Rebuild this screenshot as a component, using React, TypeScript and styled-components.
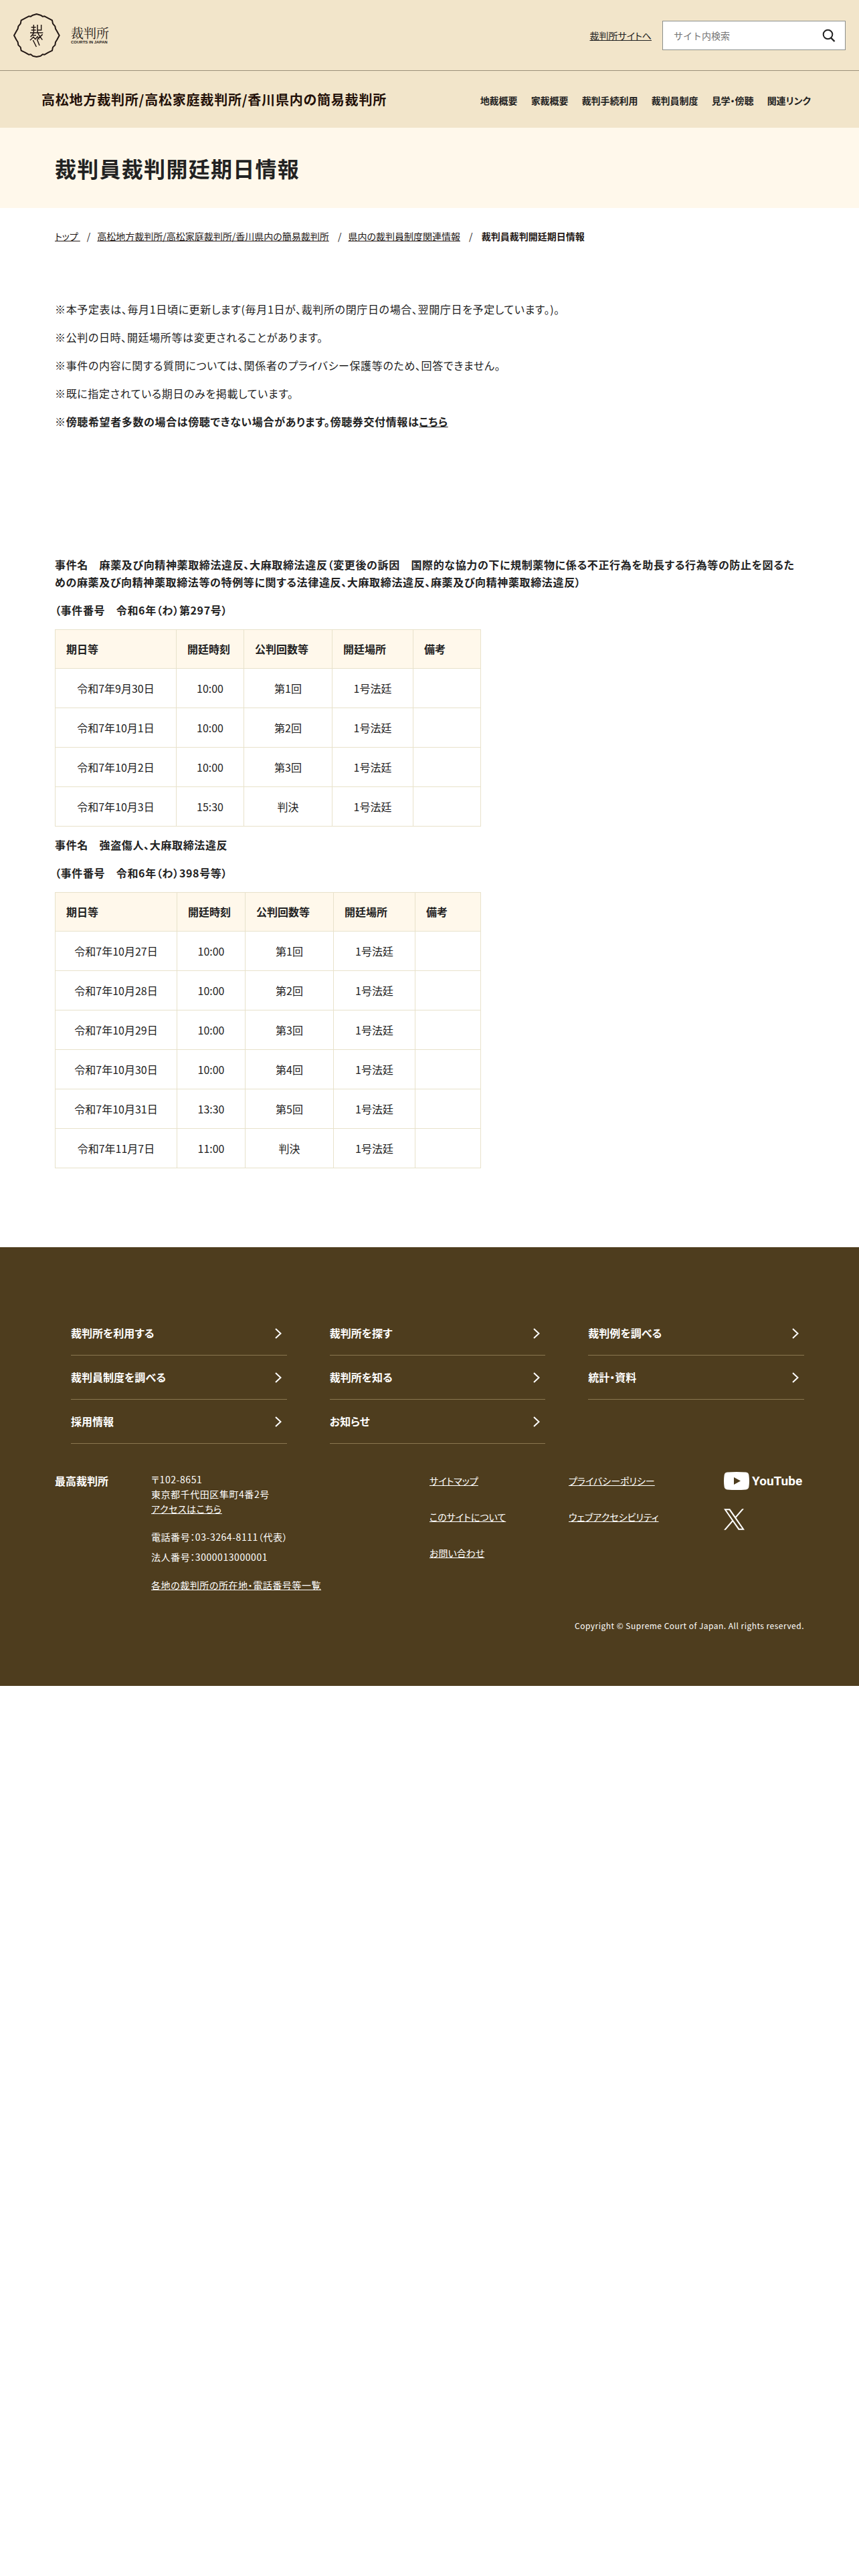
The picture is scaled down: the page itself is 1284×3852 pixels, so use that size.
import React from "react";
import styled, { createGlobalStyle } from "styled-components";

const GlobalStyle = createGlobalStyle`
  *, *::before, *::after { box-sizing: border-box; }
  body {
    margin: 0;
    background: #fff;
    color: #222;
    font-family: "Noto Sans CJK JP", "Noto Sans", sans-serif;
    font-feature-settings: "palt";
    font-size: 16px;
    line-height: 26px;
  }
  a { color: inherit; }
  h1, h2, p, ul, ol { margin: 0; padding: 0; }
  ul, ol { list-style: none; }
`;

const HeaderTop = styled.header`
  display: flex;
  align-items: center;
  justify-content: space-between;
  padding: 20px 20px 19px;
  background: #f2e5ca;
  border-bottom: 1px solid #9c907a;
`;

const Brand = styled.a`
  display: flex;
  align-items: center;
  gap: 16px;
  color: #231815;
  text-decoration: none;
`;

const BrandText = styled.span`
  display: flex;
  flex-direction: column;
`;

const BrandName = styled.span`
  font-family: "Noto Serif CJK JP", "Noto Sans CJK JP", serif;
  font-size: 19px;
  line-height: 20px;
`;

const BrandSub = styled.span`
  font-family: "Liberation Sans", Arial, sans-serif;
  font-size: 6px;
  line-height: 8px;
  font-weight: 700;
`;

const HeaderTools = styled.div`
  display: flex;
  align-items: center;
  gap: 16px;
`;

const SmallLink = styled.a`
  font-size: 14px;
  line-height: 22px;
`;

const SearchForm = styled.form`
  display: flex;
  align-items: center;
  width: 274px;
  height: 44px;
  background: #fff;
  border: 1px solid #8b8f8c;
`;

const SearchInput = styled.input`
  flex: 1;
  min-width: 0;
  padding: 0 16px;
  border: 0;
  outline: 0;
  background: transparent;
  font-family: inherit;
  font-size: 14px;
  color: #222;
  &::placeholder { color: #757575; opacity: 1; }
`;

const SearchButton = styled.button`
  display: flex;
  align-items: center;
  justify-content: center;
  width: 48px;
  height: 42px;
  padding: 0;
  border: 0;
  background: transparent;
  color: #222;
`;

const SiteBar = styled.div`
  display: flex;
  align-items: center;
  justify-content: space-between;
  height: 85px;
  padding: 0 72px 0 62px;
  background: #f2e5ca;
`;

const SiteName = styled.a`
  font-size: 20px;
  line-height: 32px;
  font-weight: 700;
  letter-spacing: 0.04em;
  color: #231008;
  text-decoration: none;
`;

const SiteNav = styled.nav`
  ul { display: flex; gap: 20px; }
  a {
    font-size: 14px;
    line-height: 22px;
    font-weight: 700;
    text-decoration: none;
  }
`;

const TitleBand = styled.div`
  padding: 36px 82px;
  background: #fff8eb;
`;

const PageTitle = styled.h1`
  font-size: 32px;
  line-height: 48px;
  font-weight: 700;
  letter-spacing: 0.04em;
`;

const Breadcrumb = styled.nav`
  padding: 32px 82px 0;
  font-size: 14px;
  line-height: 20px;
  color: #231815;
  ol { display: flex; flex-wrap: wrap; }
  li { white-space: pre; }
  li + li::before { content: "/"; margin: 0 10px; }
`;

const Main = styled.main`
  padding: 86px 82px 118px;
`;

const Notes = styled.div`
  display: flex;
  flex-direction: column;
  gap: 16px;
  margin-bottom: 188px;
  letter-spacing: 0.04em;
`;

const Case = styled.section`
  & + & { margin-top: 14px; }
`;

const CaseTitle = styled.h2`
  margin-bottom: 16px;
  font-size: 16px;
  line-height: 26px;
  font-weight: 700;
  letter-spacing: 0.04em;
`;

const Schedule = styled.table`
  width: 636px;
  border-collapse: collapse;
  table-layout: fixed;
  th, td { border: 1px solid #e8e2cb; }
  th {
    padding: 16px;
    line-height: 25px;
    font-weight: 700;
    text-align: left;
    white-space: nowrap;
    background: #fff8eb;
  }
  td {
    height: 59px;
    padding: 16px;
    text-align: center;
    white-space: nowrap;
  }
`;

const Column = styled.col<{ $width: number }>`
  width: ${(p) => p.$width}px;
`;

const Footer = styled.footer`
  padding: 96px 82px 80px;
  background: #4e3d1e;
  color: #fff;
`;

const FooterNav = styled.ul`
  display: grid;
  grid-template-columns: repeat(3, 1fr);
  column-gap: 64px;
  margin-bottom: 42px;
  padding-left: 24px;
`;

const FooterNavLink = styled.a`
  display: flex;
  align-items: center;
  justify-content: space-between;
  padding: 20px 8px 20px 0;
  border-bottom: 1px solid #8a7750;
  line-height: 25px;
  font-weight: 700;
  text-decoration: none;
`;

const FooterInfo = styled.div`
  display: grid;
  grid-template-columns: 144px 416px 208px 1fr 120px;
  margin-bottom: 40px;
`;

const Office = styled.p`
  font-weight: 700;
`;

const Address = styled.div`
  display: flex;
  flex-direction: column;
  gap: 20px;
  font-size: 14px;
  line-height: 22px;
  letter-spacing: 0.04em;
`;

const Numbers = styled.div`
  display: flex;
  flex-direction: column;
  gap: 8px;
`;

const LinkList = styled.ul`
  display: flex;
  flex-direction: column;
  gap: 28px;
  font-size: 14px;
`;

const Social = styled.div`
  display: flex;
  flex-direction: column;
  align-items: flex-start;
  gap: 28px;
`;

const YouTubeLink = styled.a`
  display: flex;
  align-items: center;
  gap: 4px;
  height: 27px;
  font-family: Roboto, "Liberation Sans", sans-serif;
  font-size: 19px;
  line-height: 27px;
  font-weight: 700;
  text-decoration: none;
`;

const XLink = styled.a`
  display: flex;
`;

const Copyright = styled.p`
  font-size: 12px;
  line-height: 20px;
  letter-spacing: 0.04em;
  text-align: right;
`;

const Emblem = () => (
  <svg width="70" height="66" viewBox="15 11 208 198" fill="none" stroke="currentColor" aria-hidden="true">
    <path
      strokeWidth="6"
      strokeLinejoin="round"
      d="M118 14L101 19L92 25L83 24L66 33L49 42L46 57L36 69L34 80L27 92L17 110L27 129L34 140L36 153L46 163L49 178L66 186L83 196L92 195L101 202L118 206L136 202L145 195L154 196L171 186L188 178L191 163L201 153L203 140L210 129L220 110L210 92L203 80L201 69L191 57L188 42L171 33L154 24L145 25L136 19Z"
    />
    <path
      strokeWidth="4.500"
      d="M105 62V99M94 73H115M94 86H115M89 98H147M122 62V92L127 106L144 130M124 86H139V62M98 109H116M106 99L91 117M145 105L122 127M89 132L104 117L112 127L122 115L130 127M102 131L117 161M120 127L131 155"
    />
  </svg>
);

const SearchIcon = () => (
  <svg width="20" height="20" viewBox="0 0 20 20" fill="none" stroke="currentColor" strokeWidth="2" aria-hidden="true">
    <circle cx="8.5" cy="8.5" r="6.8" />
    <path d="M13 13.5L18.5 19" strokeWidth="2.4" />
  </svg>
);

const Chevron = () => (
  <svg width="10" height="16" viewBox="0 0 10 16" fill="none" stroke="currentColor" strokeWidth="2" aria-hidden="true">
    <path d="M1 1L8.5 8L1 15" />
  </svg>
);

const PlayBadge = () => (
  <svg width="38" height="27" viewBox="0 0 38 27" aria-hidden="true">
    <path
      fill="#fff"
      fillRule="evenodd"
      d="M5 .6Q19-.6 33 .6Q37 1 37.4 5Q38.6 13.500 37.400 22Q37 26 33 26.400Q19 27.600 5 26.400Q1 26 .6 22Q-.6 13.500 .6 5Q1 1 5 .6ZM15 8V19L25 13.500Z"
    />
  </svg>
);

const XLogo = () => (
  <svg width="31" height="32" viewBox="0 0 1200 1227" aria-hidden="true">
    <path
      fill="#fff"
      d="M714.163 519.284L1160.89 0H1055.03L667.137 450.887L357.328 0H0L468.492 681.821L0 1226.37H105.866L515.491 750.218L842.672 1226.37H1200L714.137 519.284H714.163ZM569.165 687.828L521.697 619.934L144.011 79.6944H306.615L611.412 515.685L658.88 583.579L1055.08 1150.3H892.476L569.165 687.854V687.828Z"
    />
  </svg>
);

const siteNav = ["地裁概要", "家裁概要", "裁判手続利用", "裁判員制度", "見学・傍聴", "関連リンク"];

const headings = ["期日等", "開廷時刻", "公判回数等", "開廷場所", "備考"];

const cases = [
  {
    title:
      "事件名　麻薬及び向精神薬取締法違反、大麻取締法違反（変更後の訴因　国際的な協力の下に規制薬物に係る不正行為を助長する行為等の防止を図るための麻薬及び向精神薬取締法等の特例等に関する法律違反、大麻取締法違反、麻薬及び向精神薬取締法違反）",
    number: "（事件番号　令和6年（わ）第297号）",
    widths: [181, 101, 132, 121, 101],
    rows: [
      ["令和7年9月30日", "10:00", "第1回", "1号法廷", ""],
      ["令和7年10月1日", "10:00", "第2回", "1号法廷", ""],
      ["令和7年10月2日", "10:00", "第3回", "1号法廷", ""],
      ["令和7年10月3日", "15:30", "判決", "1号法廷", ""],
    ],
  },
  {
    title: "事件名　強盗傷人、大麻取締法違反",
    number: "（事件番号　令和6年（わ）398号等）",
    widths: [182, 102, 132, 122, 98],
    rows: [
      ["令和7年10月27日", "10:00", "第1回", "1号法廷", ""],
      ["令和7年10月28日", "10:00", "第2回", "1号法廷", ""],
      ["令和7年10月29日", "10:00", "第3回", "1号法廷", ""],
      ["令和7年10月30日", "10:00", "第4回", "1号法廷", ""],
      ["令和7年10月31日", "13:30", "第5回", "1号法廷", ""],
      ["令和7年11月7日", "11:00", "判決", "1号法廷", ""],
    ],
  },
];

const footerNav = [
  "裁判所を利用する",
  "裁判所を探す",
  "裁判例を調べる",
  "裁判員制度を調べる",
  "裁判所を知る",
  "統計・資料",
  "採用情報",
  "お知らせ",
];

const siteLinks = ["サイトマップ", "このサイトについて", "お問い合わせ"];
const policyLinks = ["プライバシーポリシー", "ウェブアクセシビリティ"];

export default function App() {
  return (
    <>
      <GlobalStyle />
      <HeaderTop>
        <Brand href="#">
          <Emblem />
          <BrandText>
            <BrandName>裁判所</BrandName>
            <BrandSub>COURTS IN JAPAN</BrandSub>
          </BrandText>
        </Brand>
        <HeaderTools>
          <SmallLink href="#">裁判所サイトへ</SmallLink>
          <SearchForm role="search">
            <SearchInput type="text" placeholder="サイト内検索" aria-label="サイト内検索" />
            <SearchButton type="button" aria-label="検索">
              <SearchIcon />
            </SearchButton>
          </SearchForm>
        </HeaderTools>
      </HeaderTop>

      <SiteBar>
        <SiteName href="#">高松地方裁判所/高松家庭裁判所/香川県内の簡易裁判所</SiteName>
        <SiteNav>
          <ul>
            {siteNav.map((item) => (
              <li key={item}>
                <a href="#">{item}</a>
              </li>
            ))}
          </ul>
        </SiteNav>
      </SiteBar>

      <TitleBand>
        <PageTitle>裁判員裁判開廷期日情報</PageTitle>
      </TitleBand>

      <Breadcrumb>
        <ol>
          <li>
            <a href="#">{"トップ "}</a>
          </li>
          <li>
            <a href="#">高松地方裁判所/高松家庭裁判所/香川県内の簡易裁判所</a>{" "}
          </li>
          <li>
            <a href="#">県内の裁判員制度関連情報</a>{" "}
          </li>
          <li>
            {" "}
            <strong>裁判員裁判開廷期日情報</strong>
          </li>
        </ol>
      </Breadcrumb>

      <Main>
        <Notes>
          <p>※本予定表は、毎月1日頃に更新します(毎月1日が、裁判所の閉庁日の場合、翌開庁日を予定しています。)。</p>
          <p>※公判の日時、開廷場所等は変更されることがあります。</p>
          <p>※事件の内容に関する質問については、関係者のプライバシー保護等のため、回答できません。</p>
          <p>※既に指定されている期日のみを掲載しています。</p>
          <p>
            <strong>
              ※傍聴希望者多数の場合は傍聴できない場合があります。傍聴券交付情報は<a href="#">こちら</a>
            </strong>
          </p>
        </Notes>

        {cases.map((c) => (
          <Case key={c.number}>
            <CaseTitle>{c.title}</CaseTitle>
            <CaseTitle as="p">{c.number}</CaseTitle>
            <Schedule>
              <colgroup>
                {c.widths.map((w, i) => (
                  <Column key={i} $width={w} />
                ))}
              </colgroup>
              <thead>
                <tr>
                  {headings.map((h) => (
                    <th key={h} scope="col">
                      {h}
                    </th>
                  ))}
                </tr>
              </thead>
              <tbody>
                {c.rows.map((row) => (
                  <tr key={row[0]}>
                    {row.map((cell, i) => (
                      <td key={i}>{cell}</td>
                    ))}
                  </tr>
                ))}
              </tbody>
            </Schedule>
          </Case>
        ))}
      </Main>

      <Footer>
        <FooterNav>
          {footerNav.map((item) => (
            <li key={item}>
              <FooterNavLink href="#">
                {item}
                <Chevron />
              </FooterNavLink>
            </li>
          ))}
        </FooterNav>
        <FooterInfo>
          <Office>最高裁判所</Office>
          <Address>
            <p>
              〒102-8651
              <br />
              東京都千代田区隼町4番2号
              <br />
              <a href="#">アクセスはこちら</a>
            </p>
            <Numbers>
              <p>電話番号：03-3264-8111（代表）</p>
              <p>法人番号：3000013000001</p>
            </Numbers>
            <p>
              <a href="#">各地の裁判所の所在地・電話番号等一覧</a>
            </p>
          </Address>
          <LinkList>
            {siteLinks.map((item) => (
              <li key={item}>
                <a href="#">{item}</a>
              </li>
            ))}
          </LinkList>
          <LinkList>
            {policyLinks.map((item) => (
              <li key={item}>
                <a href="#">{item}</a>
              </li>
            ))}
          </LinkList>
          <Social>
            <YouTubeLink href="#">
              <PlayBadge />
              YouTube
            </YouTubeLink>
            <XLink href="#" aria-label="X">
              <XLogo />
            </XLink>
          </Social>
        </FooterInfo>
        <Copyright>Copyright © Supreme Court of Japan. All rights reserved.</Copyright>
      </Footer>
    </>
  );
}
